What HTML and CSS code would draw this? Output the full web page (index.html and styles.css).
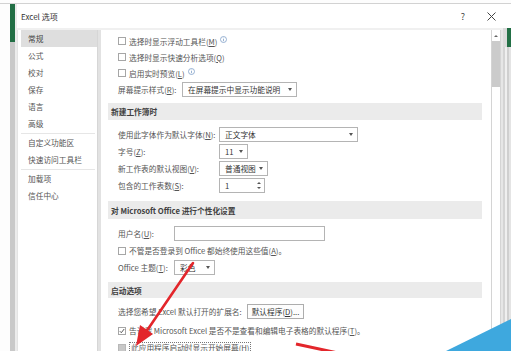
FILE: index.html
```html
<!DOCTYPE html>
<html lang="zh-CN">
<head>
<meta charset="utf-8">
<title>Excel 选项</title>
<link rel="stylesheet" href="styles.css">
</head>
<body>
<div class="screen">
  <div class="lside"><div class="stripe"></div><div class="stripe2"></div></div>
  <div class="dialog">
    <div class="titlebar">
      <span class="title">Excel 选项</span>
      <span class="help">?</span>
      <span class="close"><svg width="9" height="9" viewBox="0 0 9 9"><path d="M0.5 0.5L8.5 8.5M8.5 0.5L0.5 8.5" stroke="#444" stroke-width="1"/></svg></span>
    </div>
    <div class="main">
      <nav class="nav">
        <div class="nav-item active">常规</div>
        <div class="nav-item">公式</div>
        <div class="nav-item">校对</div>
        <div class="nav-item">保存</div>
        <div class="nav-item">语言</div>
        <div class="nav-item">高级</div>
        <div class="nav-sep"></div>
        <div class="nav-item">自定义功能区</div>
        <div class="nav-item">快速访问工具栏</div>
        <div class="nav-sep"></div>
        <div class="nav-item">加载项</div>
        <div class="nav-item">信任中心</div>
      </nav>
      <div class="vdiv"></div>
      <div class="content">
        <div class="pane">
          <div class="group g1">
            <div class="row r16"><span class="cb"></span>选择时显示浮动工具栏(<u>M</u>)<span class="info"><svg width="7" height="7" viewBox="0 0 7 7"><circle cx="3.5" cy="3.5" r="3" fill="none" stroke="#7f9fc8" stroke-width="0.8"/><path d="M3.5 3v2.2M3.5 1.7v0.6" stroke="#7f9fc8" stroke-width="0.8"/></svg></span></div>
            <div class="row r16"><span class="cb"></span>选择时显示快速分析选项(<u>Q</u>)</div>
            <div class="row r16"><span class="cb"></span>启用实时预览(<u>L</u>)<span class="info"><svg width="7" height="7" viewBox="0 0 7 7"><circle cx="3.5" cy="3.5" r="3" fill="none" stroke="#7f9fc8" stroke-width="0.8"/><path d="M3.5 3v2.2M3.5 1.7v0.6" stroke="#7f9fc8" stroke-width="0.8"/></svg></span></div>
            <div class="row r16"><span class="lbl w64">屏幕提示样式(<u>R</u>):</span><span class="dd w115">在屏幕提示中显示功能说明<i class="tri"></i></span></div>
          </div>
          <div class="hdr h1">新建工作簿时</div>
          <div class="group g2">
            <div class="row"><span class="lbl w101">使用此字体作为默认字体(<u>N</u>):</span><span class="dd w139">正文字体<i class="tri"></i></span></div>
            <div class="row"><span class="lbl w101">字号(<u>Z</u>):</span><span class="dd w29">11<i class="tri"></i></span></div>
            <div class="row"><span class="lbl w101">新工作表的默认视图(<u>V</u>):</span><span class="dd w49">普通视图<i class="tri"></i></span></div>
            <div class="row"><span class="lbl w101">包含的工作表数(<u>S</u>):</span><span class="dd w46">1<span class="spin"><i class="up"></i><i class="down"></i></span></span></div>
          </div>
          <div class="hdr h2">对 Microsoft Office 进行个性化设置</div>
          <div class="group g3">
            <div class="row"><span class="lbl w56">用户名(<u>U</u>):</span><span class="inp w151"></span></div>
            <div class="row"><span class="cb"></span>不管是否登录到 Office 都始终使用这些值(<u>A</u>)。</div>
            <div class="row"><span class="lbl w56">Office 主题(<u>T</u>):</span><span class="dd w41">彩色<i class="tri"></i></span></div>
          </div>
          <div class="hdr h3">启动选项</div>
          <div class="group g4">
            <div class="row"><span class="lbl w129">选择您希望 Excel 默认打开的扩展名:</span><span class="btn">默认程序(<u>D</u>)...</span></div>
            <div class="row"><span class="cb checked"><svg width="6" height="6" viewBox="0 0 6 6"><path d="M0.8 3.2L2.3 4.7L5.2 1" fill="none" stroke="#444" stroke-width="0.9"/></svg></span>告诉我 Microsoft Excel 是否不是查看和编辑电子表格的默认程序(<u>T</u>)。</div>
            <div class="row"><span class="cb filled"></span><span class="focus">此应用程序启动时显示开始屏幕(<u>H</u>)</span></div>
          </div>
        </div>
        <div class="vscroll">
          <div class="sb-up"><i></i></div>
          <div class="sb-thumb"></div>
          <div class="sb-track"></div>
        </div>
        <div class="cedge"></div>
      </div>
    </div>
  </div>
  <div class="rside"><div class="r-top"></div><div class="r-green"></div><div class="r-rest"></div></div>
  <svg class="overlay" width="511" height="351" viewBox="0 0 511 351">
    <path d="M193 263 L146 332" stroke="#e3262b" stroke-width="2.6" stroke-linecap="round" fill="none"/>
    <polygon points="136,346 140,325 153,334" fill="#e3262b"/>
    <path d="M296 344 L338 353" stroke="#e3262b" stroke-width="3" fill="none"/>
    <polygon points="446,351 511,319 511,351" fill="#3ea8de"/>
  </svg>
</div>
</body>
</html>
```
FILE: styles.css
```css
* { box-sizing: border-box; }
body {
  margin: 0;
  background: #ffffff;
  font-family: "Noto Sans CJK SC", "Noto Sans", sans-serif;
}
.screen {
  position: relative;
  width: 511px;
  height: 351px;
  overflow: hidden;
  display: flex;
  padding-top: 3px;
  background: #fdfdfd;
}
.lside {
  width: 17px;
  flex: none;
  display: flex;
  padding-left: 10px;
  border-top: 1px solid #d2d2d2;
}
.stripe {
  width: 5px;
  background: linear-gradient(#226f45 0 38px, #c9c9c9 38px);
}
.stripe2 {
  width: 2px;
  background: #ececec;
}
.dialog {
  flex: 1;
  min-width: 0;
  display: flex;
  flex-direction: column;
  border-top: 1px solid #d2d2d2;
  background: #ffffff;
}
.titlebar {
  height: 24px;
  flex: none;
  display: flex;
  align-items: center;
  padding-left: 4px;
  padding-right: 4px;
  font-size: 8px;
  color: #333;
}
.title { flex: 1; }
.help {
  width: 12px;
  text-align: center;
  font-size: 9px;
  color: #444;
  margin-right: 14px;
}
.close {
  width: 16px;
  height: 10px;
  display: flex;
  justify-content: center;
  align-items: center;
}
.main {
  flex: 1;
  display: flex;
  padding-top: 2px;
  background: #f0f0f0;
  min-height: 0;
}
.nav {
  width: 80px;
  flex: none;
  background: #ffffff;
  padding-left: 3px;
  border-left: 1px solid #e4e4e4;
}
.nav-item {
  height: 17px;
  line-height: 17px;
  padding-left: 7px;
  font-size: 7.7px;
  color: #555;
  white-space: nowrap;
}
.nav-item.active { background: #dedede; color: #444; }
.nav-sep {
  height: 2px;
  border-bottom: 1px solid #e6e6e6;
  margin-right: 2px;
}
.vdiv {
  width: 4px;
  flex: none;
  background: #e2e2e2;
  border-left: 1px solid #d6d6d6;
}
.content {
  flex: 1;
  display: flex;
  background: #ffffff;
  min-width: 0;
}
.pane {
  flex: 1;
  min-width: 0;
  padding: 3px 9px 0 7px;
  overflow: hidden;
}
.row {
  height: 17px;
  display: flex;
  align-items: center;
  padding-left: 10px;
  font-size: 7.7px;
  color: #555;
  white-space: nowrap;
}
.row.r16 { height: 16px; }
.row u { text-decoration: underline; text-underline-offset: 1px; }
.cb {
  width: 8px;
  height: 8px;
  border: 1px solid #a6a6a6;
  background: #fff;
  margin-right: 3px;
  flex: none;
  display: flex;
  align-items: center;
  justify-content: center;
}
.cb.filled { background: #c8c8c8; border-color: #b8b8b8; }
.focus {
  border: 1px dotted #777;
  padding: 0 1px;
  line-height: 9px;
  height: 11px;
}
.info { margin-left: 3px; display: flex; align-self: flex-start; margin-top: 3px; }
.lbl { flex: none; }
.w64 { width: 64px; }
.w101 { width: 101px; }
.w56 { width: 56px; }
.w129 { width: 129px; }
.dd, .inp {
  height: 15px;
  border: 1px solid #b4b4b4;
  background: #fff;
  display: flex;
  align-items: center;
  padding-left: 5px;
  position: relative;
  color: #333;
  flex: none;
}
.w115 { width: 115px; }
.w139 { width: 139px; }
.w29 { width: 29px; }
.w49 { width: 49px; }
.w46 { width: 46px; }
.w151 { width: 151px; }
.w41 { width: 41px; }
.tri {
  margin-left: auto;
  margin-right: 4px;
  width: 0;
  height: 0;
  border-left: 2.5px solid transparent;
  border-right: 2.5px solid transparent;
  border-top: 3px solid #555;
}
.spin {
  margin-left: auto;
  margin-right: 3px;
  display: flex;
  flex-direction: column;
  gap: 3px;
}
.spin .up, .spin .down {
  width: 0; height: 0;
  border-left: 2px solid transparent;
  border-right: 2px solid transparent;
}
.spin .up { border-bottom: 2px solid #555; }
.spin .down { border-top: 2px solid #555; }
.btn {
  width: 57px;
  height: 15px;
  border: 1px solid #adadad;
  background: #fdfdfd;
  display: flex;
  align-items: center;
  justify-content: center;
  color: #333;
  flex: none;
}
.hdr {
  height: 17px;
  background: #ebebeb;
  padding-left: 3px;
  display: flex;
  align-items: center;
  font-size: 7.7px;
  font-weight: bold;
  color: #404040;
  white-space: nowrap;
}
.h1 { margin-top: 6px; }
.g2 { margin-top: 6px; }
.h2 { margin-top: 7px; height: 18px; }
.g3 { margin-top: 6px; }
.h3 { margin-top: 6px; height: 16px; }
.g4 { margin-top: 5px; }
.g4 .row:nth-child(2) { margin-top: 2px; }
.vscroll {
  width: 10px;
  flex: none;
  display: flex;
  flex-direction: column;
  border-left: 1px solid #d4d4d4;
  border-right: 1px solid #d4d4d4;
  padding-top: 2px;
  background: #fff;
}
.sb-up {
  height: 7px;
  display: flex;
  align-items: center;
  justify-content: center;
}
.sb-up i {
  width: 0; height: 0;
  border-left: 2px solid transparent;
  border-right: 2px solid transparent;
  border-bottom: 2px solid #666;
}
.sb-thumb {
  height: 46px;
  background: #cbcbcb;
  margin-top: 2px;
}
.sb-track { flex: 1; background: #ffffff; }
.cedge {
  width: 2px;
  flex: none;
  background: #e6e6e6;
}
.rside {
  width: 8px;
  flex: none;
  display: flex;
  flex-direction: column;
  border-top: 1px solid #d2d2d2;
}
.r-top { height: 24px; background: #fff; }
.r-green { height: 19px; background: linear-gradient(90deg, #dadada 0 4px, #226f45 4px); }
.r-rest { flex: 1; background: linear-gradient(90deg, #d4d4d4 0 2px, #efefef 2px 4px, #cfcfcf 4px 6px, #e4e4e4 6px); }
.overlay {
  position: absolute;
  left: 0;
  top: 0;
  pointer-events: none;
}
```
